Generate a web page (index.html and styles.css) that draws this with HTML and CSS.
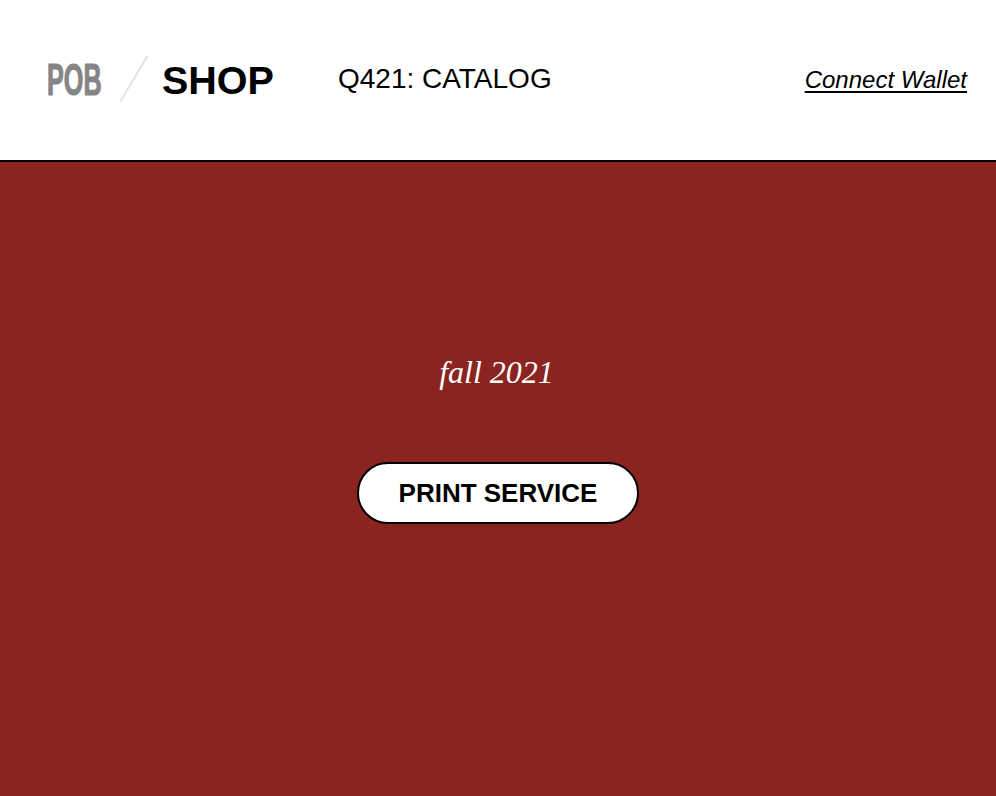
FILE: index.html
```html
<!DOCTYPE html>
<html lang="en">
<head>
<meta charset="utf-8">
<title>POB Shop</title>
<link rel="stylesheet" href="styles.css">
</head>
<body>
<header class="site-header">
  <div class="brand">
    <span class="pob-wrap"><span class="pob">POB</span></span>
    <svg class="slash" width="32" height="48" viewBox="0 0 32 48" aria-hidden="true"><line x1="29.5" y1="1" x2="2" y2="47" stroke="#e3e3e3" stroke-width="2"/></svg>
    <span class="shop">SHOP</span>
  </div>
  <div class="catalog">Q421: CATALOG</div>
  <a class="wallet" href="#">Connect Wallet</a>
</header>
<main class="hero">
  <p class="season">fall 2021</p>
  <a class="pill" href="#">PRINT SERVICE</a>
</main>
</body>
</html>
```
FILE: styles.css
```css
html, body {
  margin: 0;
  padding: 0;
  height: 100%;
}
body {
  font-family: "Liberation Sans", Arial, sans-serif;
  display: flex;
  flex-direction: column;
  background: #8b2420;
}
.site-header {
  background: #fff;
  height: 160px;
  border-bottom: 2px solid #000;
  display: flex;
  align-items: center;
  padding: 0 29px 0 47px;
  box-sizing: content-box;
}
.brand {
  display: flex;
  align-items: center;
}
.pob-wrap {
  display: inline-block;
  width: 56px;
  height: 46px;
  overflow: visible;
  margin-top: 0;
}
.pob {
  display: inline-block;
  font-size: 45px;
  line-height: 46px;
  font-weight: bold;
  color: #858585;
  -webkit-text-stroke: 1.2px #858585;
  transform: scaleX(0.56);
  transform-origin: left center;
  white-space: nowrap;
}
.slash {
  display: block;
  margin-left: 15px;
  margin-top: -2px;
}
.shop {
  font-size: 39.5px;
  font-weight: bold;
  color: #000;
  margin-left: 12px;
  line-height: 46px;
}
.catalog {
  font-size: 28px;
  margin-left: 64px;
  color: #000;
  margin-top: -3px;
}
.wallet {
  margin-left: auto;
  font-size: 24px;
  font-style: italic;
  color: #000;
  text-decoration: underline;
  text-underline-offset: 3px;
}
.hero {
  flex: 1;
  background: #8b2420;
  display: flex;
  flex-direction: column;
  align-items: center;
  padding-top: 190px;
}
.season {
  margin: 0;
  font-family: "Liberation Serif", "Times New Roman", serif;
  font-style: italic;
  font-size: 32px;
  line-height: 40px;
  color: #fff;
  padding-right: 3px;
}
.pill {
  margin-top: 70px;
  width: 278px;
  height: 58px;
  border: 2px solid #000;
  border-radius: 31px;
  background: #fff;
  color: #000;
  text-decoration: none;
  font-size: 26px;
  font-weight: bold;
  display: flex;
  align-items: center;
  justify-content: center;
  box-sizing: content-box;
}
```
